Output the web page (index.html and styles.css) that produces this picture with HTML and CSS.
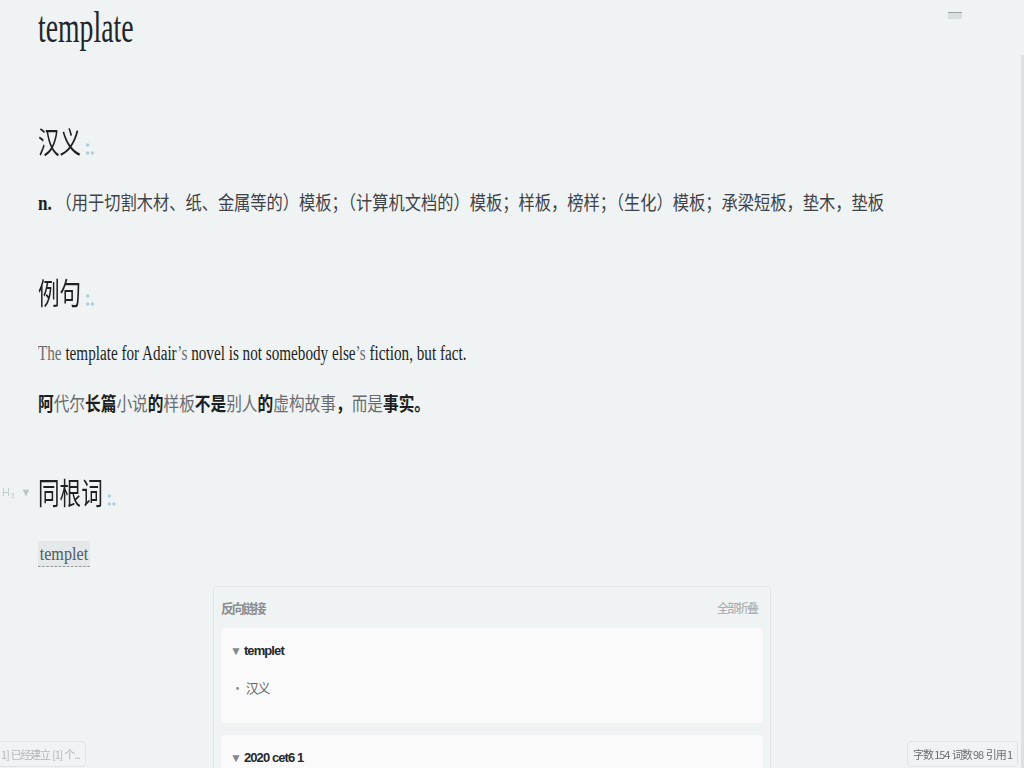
FILE: index.html
```html
<!DOCTYPE html>
<html lang="zh-CN">
<head>
<meta charset="utf-8">
<title>template</title>
<link rel="stylesheet" href="styles.css">
</head>
<body>
<div class="topmark"></div>
<div class="scrollbar"></div>
<main class="doc">
  <h1 class="title">template</h1>

  <h2 class="h"><span class="ht">汉义<svg class="dots" viewBox="0 0 14 14" width="14" height="14"><ellipse cx="3" cy="3" rx="2.3" ry="1.7"/><ellipse cx="3" cy="11" rx="2.3" ry="1.7"/><ellipse cx="9.5" cy="11" rx="2.3" ry="1.7"/></svg></span></h2>
  <p class="def"><b class="pos">n.</b> （用于切割木材、纸、金属等的）模板；（计算机文档的）模板；样板，榜样；（生化）模板；承梁短板，垫木，垫板</p>

  <h2 class="h"><span class="ht">例句<svg class="dots" viewBox="0 0 14 14" width="14" height="14"><ellipse cx="3" cy="3" rx="2.3" ry="1.7"/><ellipse cx="3" cy="11" rx="2.3" ry="1.7"/><ellipse cx="9.5" cy="11" rx="2.3" ry="1.7"/></svg></span></h2>
  <p class="en"><span class="lt">The</span> template for Adair<span class="lt">’s</span> novel is not somebody else<span class="lt">’s</span> fiction, but fact.</p>
  <p class="zh"><b>阿</b><span class="lt">代尔</span><b>长篇</b><span class="lt">小说</span><b>的</b><span class="lt">样板</span><b>不是</b><span class="lt">别人</span><b>的</b><span class="lt">虚构故事</span><b>，</b><span class="lt">而是</span><b>事实。</b></p>

  <h2 class="h"><span class="hmark">H<sub>3</sub><span class="tri">▼</span></span><span class="ht">同根词<svg class="dots" viewBox="0 0 14 14" width="14" height="14"><ellipse cx="3" cy="3" rx="2.3" ry="1.7"/><ellipse cx="3" cy="11" rx="2.3" ry="1.7"/><ellipse cx="9.5" cy="11" rx="2.3" ry="1.7"/></svg></span></h2>
  <p class="tagline"><span class="tag">templet</span></p>

  <section class="backlinks">
    <div class="bl-head"><span class="bl-title">反向链接</span><span class="bl-fold">全部折叠</span></div>
    <div class="card">
      <div class="card-title"><span class="ctri">▼</span>templet</div>
      <div class="card-item"><span class="bullet">•</span>汉义</div>
    </div>
    <div class="card">
      <div class="card-title"><span class="ctri">▼</span>2020 cet6 1</div>
    </div>
  </section>
</main>
<div class="status-left">1] 已经建立 [1] 个...</div>
<div class="status-right">字数 154 &nbsp;词数 98 &nbsp;引用 1</div>
</body>
</html>
```

FILE: styles.css
```css
html, body {
  margin: 0;
  padding: 0;
  background: #eff3f4;
  height: 100%;
  overflow: hidden;
}
body {
  font-family: "Liberation Serif", "Noto Sans CJK SC", serif;
  color: #222;
}
.doc {
  padding: 6px 0 0 38px;
}
.title {
  margin: 0 0 72px;
  font-family: "Liberation Serif", serif;
  font-weight: normal;
  font-size: 44px;
  line-height: 44px;
  color: #23252a;
  white-space: nowrap;
  transform: scaleX(0.63);
  transform-origin: 0 50%;
}
.h {
  position: relative;
  margin: 56px 0 30px;
  font-family: "Noto Sans CJK SC", sans-serif;
  font-weight: normal;
  font-size: 30px;
  line-height: 36px;
  color: #1e2024;
}
.ht {
  display: inline-block;
  white-space: nowrap;
  transform: scaleX(0.72);
  transform-origin: 0 50%;
}
.dots {
  fill: #a9cddb;
  margin-left: 6px;
  vertical-align: -3px;
}
.hmark {
  position: absolute;
  left: -36px;
  top: 12px;
  font-family: "Liberation Sans", sans-serif;
  font-size: 11px;
  line-height: 14px;
  color: #c4cdd0;
}
.hmark sub {
  font-size: 8px;
  vertical-align: -2px;
}
.tri {
  font-size: 11px;
  margin-left: 6px;
  color: #b9c3c6;
}
p {
  margin: 0 0 22px;
  line-height: 28px;
  white-space: nowrap;
  transform-origin: 0 50%;
}
.def {
  font-family: "Noto Sans CJK SC", sans-serif;
  font-size: 19px;
  color: #3f4246;
  transform: scaleX(0.855);
}
.pos {
  font-family: "Liberation Serif", serif;
  font-weight: bold;
  font-size: 20px;
  color: #1d1f22;
}
.en {
  font-family: "Liberation Serif", serif;
  font-size: 20px;
  color: #1d1f22;
  transform: scaleX(0.759);
}
.zh {
  font-family: "Noto Sans CJK SC", sans-serif;
  font-size: 19px;
  color: #1d1f22;
  transform: scaleX(0.825);
}
.zh b {
  font-weight: bold;
}
.lt {
  color: #6a6d70;
  font-weight: normal;
}
.tagline {
  margin-bottom: 17px;
  padding-top: 2px;
}
.tag {
  display: inline-block;
  padding: 0 2px;
  background: #e4e8e9;
  border-bottom: 1px dashed #8a8f92;
  font-family: "Liberation Serif", serif;
  font-size: 19px;
  line-height: 25px;
  color: #555a5e;
  transform: scaleX(0.85);
  transform-origin: 0 50%;
}
.backlinks {
  margin-left: 175px;
  width: 542px;
  padding: 0 7px 12px;
  border: 1px solid #e1e6e7;
  border-radius: 3px;
  font-family: "Liberation Sans", "Noto Sans CJK SC", sans-serif;
}
.bl-head {
  display: flex;
  justify-content: space-between;
  align-items: center;
  height: 41px;
}
.bl-title {
  font-family: "Noto Sans CJK SC", sans-serif;
  font-weight: bold;
  font-size: 13px;
  letter-spacing: -2.2px;
  color: #8b8d8f;
}
.bl-fold {
  font-family: "Noto Sans CJK SC", sans-serif;
  font-size: 12px;
  letter-spacing: -2px;
  color: #a3a6a8;
  margin-right: 6px;
}
.card {
  background: #fafafa;
  border-radius: 4px;
  height: 95px;
  padding: 0 10px;
  box-sizing: border-box;
  margin-bottom: 12px;
}
.card-title {
  padding-top: 14px;
  height: 18px;
  font-weight: bold;
  font-size: 13px;
  line-height: 18px;
  letter-spacing: -0.9px;
  color: #26282b;
}
.ctri {
  font-size: 12px;
  color: #85888b;
  margin-right: 2px;
  margin-left: -1px;
  letter-spacing: 0;
}
.card-item {
  margin-top: 19px;
  font-family: "Noto Sans CJK SC", sans-serif;
  font-size: 13px;
  line-height: 18px;
  letter-spacing: -1.3px;
  color: #65686b;
}
.bullet {
  color: #8a8d90;
  margin-right: 3px;
}
.status-left {
  position: fixed;
  left: -14px;
  bottom: 1px;
  height: 24px;
  padding: 0 5px 0 14px;
  border: 1px solid #dfe4e5;
  border-radius: 4px;
  font-family: "Noto Sans CJK SC", sans-serif;
  font-size: 11px;
  line-height: 24px;
  letter-spacing: -1.2px;
  word-spacing: 1px;
  color: #b3b7ba;
}
.status-right {
  position: fixed;
  right: 6px;
  bottom: 1px;
  height: 24px;
  padding: 0 5px;
  border: 1px solid #dfe4e5;
  border-radius: 4px;
  font-family: "Noto Sans CJK SC", sans-serif;
  font-size: 11px;
  line-height: 24px;
  letter-spacing: -1.1px;
  color: #6a6e71;
}
.topmark {
  position: fixed;
  left: 948px;
  top: 12px;
  width: 14px;
  height: 7px;
  background: #d8dfe0;
  border-top: 1px solid #9aa0a2;
  box-sizing: border-box;
}
.scrollbar {
  position: fixed;
  right: 0;
  top: 55px;
  bottom: 0;
  width: 3px;
  background: #dce2e2;
}
```
